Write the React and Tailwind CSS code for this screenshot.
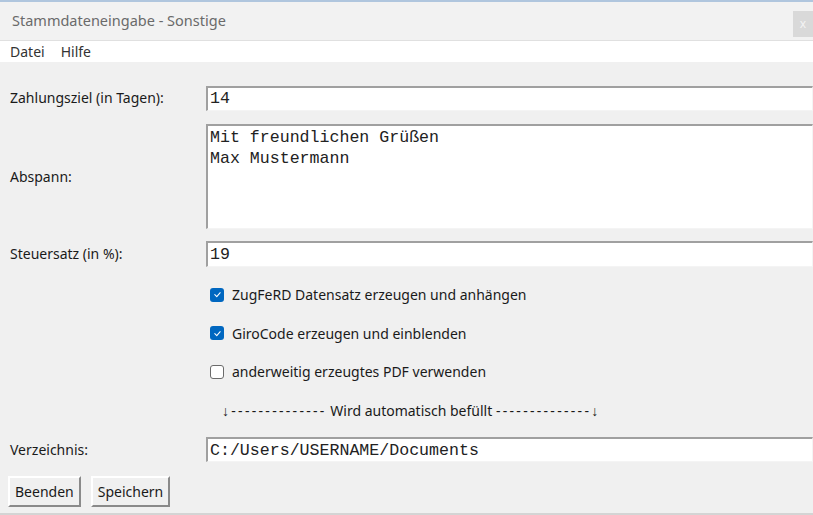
import React, { useState } from 'react';

const ui = { fontFamily: '"Noto Sans", "Open Sans", Arial, sans-serif' };
const mono = { fontFamily: '"Liberation Mono", "Courier New", monospace' };

const Field = ({ label, children, className = '' }) => (
    <div className={`flex items-center ${className}`}>
        <div className="w-[196px] shrink-0 text-[14px] text-[#1a1a1a]">{label}</div>
        <div className="flex-1">{children}</div>
    </div>
);

const sunken = "w-full bg-white border-t-2 border-l-2 border-t-[#a0a0a0] border-l-[#a0a0a0] border-r border-b border-r-[#f4f4f4] border-b-[#f4f4f4] text-[16.6px] text-[#222] px-[2px] outline-none";

const Check = ({ checked, label, onChange }) => (
    <label className="flex items-center h-[38.5px] pl-[210px] cursor-default">
        <span
            onClick={onChange}
            className={`w-[14px] h-[14px] rounded-[3px] flex items-center justify-center ${checked ? 'bg-[#0067c0]' : 'bg-white border border-[#6b6b6b]'}`}
        >
            {checked && (
                <svg width="9" height="9" viewBox="0 0 10 10">
                    <path d="M2 5.2 L4.2 7.3 L8 3" fill="none" stroke="#fff" strokeWidth="1.2" strokeLinecap="round" strokeLinejoin="round" />
                </svg>
            )}
        </span>
        <span className="ml-[8px] text-[14px] text-[#1a1a1a]">{label}</span>
    </label>
);

const Btn = ({ children }) => (
    <button className="h-[31px] px-[5px] bg-[#f0f0f0] border-2 border-t-white border-l-white border-r-[#8a8a8a] border-b-[#8a8a8a] text-[14px] text-[#1a1a1a]">
        {children}
    </button>
);

export default function App() {
    const [zugferd, setZugferd] = useState(true);
    const [giro, setGiro] = useState(true);
    const [pdf, setPdf] = useState(false);

    return (
        <div className="w-[813px] h-[515px] bg-[#f0f0f0] overflow-hidden flex flex-col" style={ui}>
            {/* title bar */}
            <div className="h-[41px] bg-[#f2f2f2] border-t-2 border-t-[#b0c6de] border-b border-b-[#e0e0e0] flex items-center justify-between relative">
                <span className="pl-[12px] text-[14.5px] text-[#6a6a6a]">Stammdateneingabe - Sonstige</span>
                <div className="absolute right-0 top-[9px] w-[20px] h-[26px] bg-[#d9d9d9] flex items-center justify-center text-[12px] text-[#f4f4f4]">x</div>
            </div>

            {/* menu */}
            <div className="h-[21px] bg-white flex items-center gap-[16px] pl-[10px] text-[14px] text-[#333]">
                <span>Datei</span>
                <span>Hilfe</span>
            </div>

            {/* form */}
            <div className="flex-1 flex flex-col pl-[10px] border-b-2 border-b-[#d4d4d4]">
                <Field label="Zahlungsziel (in Tagen):" className="mt-[23px]">
                    <input className={`${sunken} h-[25px]`} style={mono} defaultValue="14" />
                </Field>
                <Field label="Abspann:" className="mt-[13px]">
                    <textarea
                        className={`${sunken} h-[105px] resize-none leading-[21px] pt-[1px] block`}
                        style={mono}
                        defaultValue={'Mit freundlichen Grüßen\nMax Mustermann'}
                    />
                </Field>
                <Field label="Steuersatz (in %):" className="mt-[12px]">
                    <input className={`${sunken} h-[26px]`} style={mono} defaultValue="19" />
                </Field>

                <div className="mt-[9px] -ml-[10px]">
                    <Check checked={zugferd} onChange={() => setZugferd(!zugferd)} label="ZugFeRD Datensatz erzeugen und anhängen" />
                    <Check checked={giro} onChange={() => setGiro(!giro)} label="GiroCode erzeugen und einblenden" />
                    <Check checked={pdf} onChange={() => setPdf(!pdf)} label="anderweitig erzeugtes PDF verwenden" />
                    <div className="h-[38.5px] flex items-center pl-[222px] text-[14px] text-[#1a1a1a] whitespace-pre">
                        <span className="tracking-[2.3px]">↓--------------</span>
                        <span> Wird automatisch befüllt </span>
                        <span className="tracking-[2.3px]">--------------</span>
                        <span>↓</span>
                    </div>
                </div>

                <Field label="Verzeichnis:" className="mt-[7px]">
                    <input className={`${sunken} h-[25px]`} style={mono} defaultValue="C:/Users/USERNAME/Documents" />
                </Field>

                <div className="flex gap-[10px] mt-[14px] -ml-[2px]">
                    <Btn>Beenden</Btn>
                    <Btn>Speichern</Btn>
                </div>
            </div>
        </div>
    );
}
